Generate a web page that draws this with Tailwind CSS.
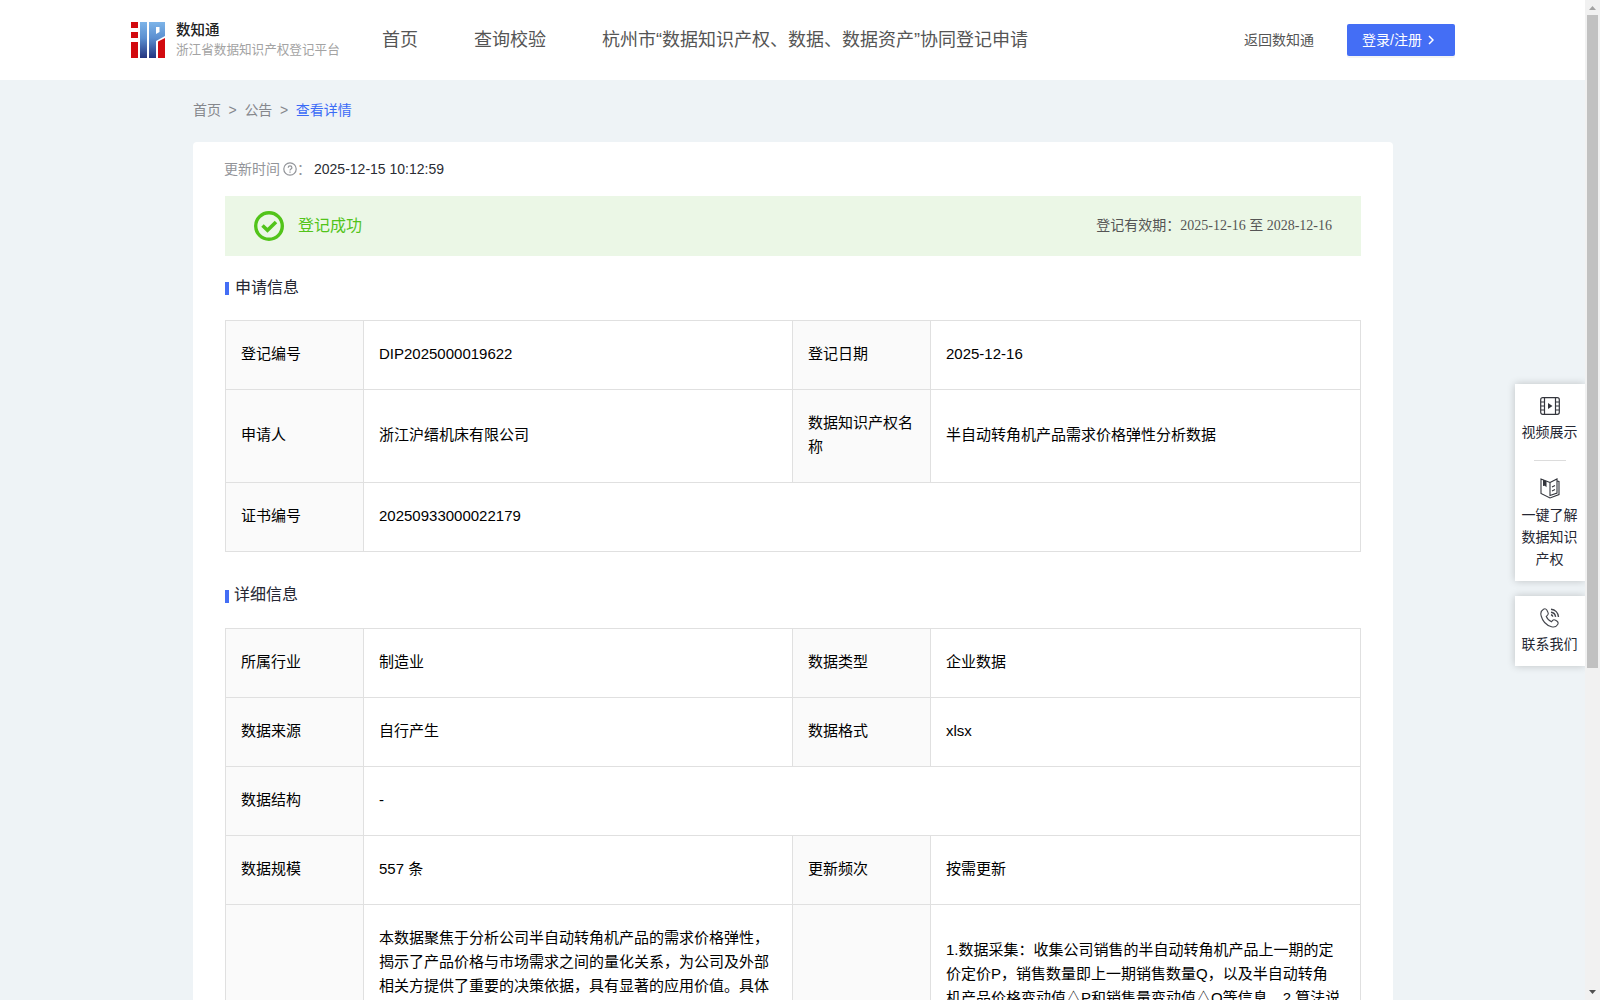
<!DOCTYPE html>
<html lang="zh-CN">
  <head>
    <meta charset="UTF-8" />
    <meta name="viewport" content="width=device-width, initial-scale=1.0" />
    <title>浙江省数据知识产权登记平台</title>
    <script src="https://cdn.jsdelivr.net/npm/@tailwindcss/browser@4"></script>
  </head>

  <body
    class="flex h-screen overflow-hidden bg-[#eef3f6] font-['Liberation_Sans','Noto_Sans_CJK_SC',sans-serif] text-sm text-[#555]"
  >
    <div class="relative h-full flex-1 overflow-hidden">
      <!-- Header -->
      <header class="flex h-20 items-center bg-white pl-[131px] pr-[130px]">
        <div class="flex w-[251px] items-center gap-[11px]">
          <svg class="h-9 w-[34px]" viewBox="0 0 34 36">
            <defs>
              <linearGradient id="logo-blue" x1="0" y1="0" x2="0" y2="36" gradientUnits="userSpaceOnUse">
                <stop offset="0" stop-color="#7db4e8" />
                <stop offset="0.45" stop-color="#5b8fd0" />
                <stop offset="1" stop-color="#23347f" />
              </linearGradient>
            </defs>
            <path fill="#d20a0f" d="M0 0h7v6H0zM0 10h7v6H0zM0 20h7v16H0zM27 19.500l7-3.500v20h-7z" />
            <path fill="url(#logo-blue)" d="M9 0h7v36H9zM18 0h16v14l-9 5v17h-7z" />
            <path fill="#fff" d="M25 5h3.500v5L25 12z" />
          </svg>
          <div class="whitespace-nowrap">
            <p class="text-[14.5px] leading-5 font-medium text-[#222]">数知通</p>
            <p class="text-[12.6px] leading-5 text-[#a3a3a3]">浙江省数据知识产权登记平台</p>
          </div>
        </div>
        <nav class="flex gap-14 pb-px text-lg leading-6 whitespace-nowrap">
          <a>首页</a>
          <a>查询校验</a>
          <a>杭州市“数据知识产权、数据、数据资产”协同登记申请</a>
        </nav>
        <a class="ml-auto pb-px">返回数知通</a>
        <button
          class="ml-[33px] flex h-8 w-[108px] items-center rounded-[2px] bg-[#446ef5] pb-px pl-[15px] text-white shadow-[0_2px_0_rgba(0,0,0,0.045)]"
        >
          <span>登录/注册</span>
          <svg class="ml-[6px] h-[10px] w-[6px]" viewBox="0 0 6 10" fill="none" stroke="#fff" stroke-width="1.500">
            <path d="M1 1l4 4-4 4" />
          </svg>
        </button>
      </header>

      <main class="ml-[193px] w-[1200px]">
        <!-- Breadcrumb -->
        <div class="flex h-[62px] items-center gap-[7.6px] pb-[2px] text-[#85878c]">
          <span>首页</span><span>&gt;</span><span>公告</span><span>&gt;</span>
          <span class="text-[#3b6bf6]">查看详情</span>
        </div>

        <div class="rounded bg-white px-8 pb-8">
          <div class="flex h-[54px] items-center pb-px text-[#929499]">
            <span class="-ml-px">更新时间</span>
            <svg class="mt-px ml-[3px] size-[14px]" viewBox="0 0 14 14" fill="none" stroke="#929499" stroke-width="1.200">
              <circle cx="7" cy="7" r="6.200" />
              <path d="M5.200 5.700c0-2.400 3.700-2.400 3.700 0 0 1.300-1.900 1.300-1.900 2.700M7 9.500v1.200" />
            </svg>
            <span class="w-[17px]">：</span>
            <span class="text-[#2a2c33]">2025-12-15 10:12:59</span>
          </div>

          <!-- Status -->
          <div class="flex h-[60px] items-center bg-[#ebf7e6] pr-[29px] pl-[29px]">
            <svg class="size-[30px]" viewBox="0 0 30 30" fill="none" stroke="#52c41a">
              <circle cx="15" cy="15" r="13.300" stroke-width="3.400" />
              <path d="M8.500 14.500l5 4.700 8.500-8.200" stroke-width="3.600" />
            </svg>
            <span class="ml-[14px] pb-px text-base text-[#52c41a]">登记成功</span>
            <span class="ml-auto pb-[2px]">登记有效期：<span class="font-['Liberation_Serif','Noto_Sans_CJK_SC',serif]">2025-12-16 至 2028-12-16</span></span>
          </div>

          <!-- Application info -->
          <h2 class="flex h-16 items-center text-base text-[#252733]">
            <i class="mt-px mr-[6px] h-[13px] w-1 bg-[#446ef5]"></i>
            <span class="pb-px">申请信息</span>
          </h2>
          <table class="w-full table-fixed border-collapse text-[15px] leading-6 text-black [&_td]:border [&_td]:border-[#e0e0e0] [&_td]:px-[15px] [&_td]:pt-[21px] [&_td]:pb-[23px] [&_th]:border [&_th]:border-[#e0e0e0] [&_th]:bg-[#fafafa] [&_th]:px-[15px] [&_th]:pt-[21px] [&_th]:pb-[23px] [&_th]:text-left [&_th]:font-normal">
            <colgroup>
              <col class="w-[138px]" />
              <col class="w-[429px]" />
              <col class="w-[138px]" />
              <col />
            </colgroup>
            <tr>
              <th>登记编号</th>
              <td>DIP2025000019622</td>
              <th>登记日期</th>
              <td>2025-12-16</td>
            </tr>
            <tr>
              <th>申请人</th>
              <td>浙江沪缙机床有限公司</td>
              <th>数据知识产权名称</th>
              <td>半自动转角机产品需求价格弹性分析数据</td>
            </tr>
            <tr>
              <th>证书编号</th>
              <td colspan="3">20250933000022179</td>
            </tr>
          </table>

          <!-- Details -->
          <h2 class="mt-3 flex h-16 items-center text-base text-[#252733]">
            <i class="mt-px mr-[5px] h-[13px] w-1 bg-[#446ef5]"></i>
            <span class="pb-[2px]">详细信息</span>
          </h2>
          <table class="w-full table-fixed border-collapse text-[15px] leading-6 text-black [&_td]:border [&_td]:border-[#e0e0e0] [&_td]:px-[15px] [&_td]:pt-[21px] [&_td]:pb-[23px] [&_th]:border [&_th]:border-[#e0e0e0] [&_th]:bg-[#fafafa] [&_th]:px-[15px] [&_th]:pt-[21px] [&_th]:pb-[23px] [&_th]:text-left [&_th]:font-normal">
            <colgroup>
              <col class="w-[138px]" />
              <col class="w-[429px]" />
              <col class="w-[138px]" />
              <col />
            </colgroup>
            <tr>
              <th>所属行业</th>
              <td>制造业</td>
              <th>数据类型</th>
              <td>企业数据</td>
            </tr>
            <tr>
              <th>数据来源</th>
              <td>自行产生</td>
              <th>数据格式</th>
              <td>xlsx</td>
            </tr>
            <tr>
              <th>数据结构</th>
              <td colspan="3">-</td>
            </tr>
            <tr>
              <th>数据规模</th>
              <td>557 条</td>
              <th>更新频次</th>
              <td>按需更新</td>
            </tr>
            <tr class="h-[240px]">
              <th></th>
              <td class="align-top whitespace-nowrap">
                本数据聚焦于分析公司半自动转角机产品的需求价格弹性，<br />
                揭示了产品价格与市场需求之间的量化关系，为公司及外部<br />
                相关方提供了重要的决策依据，具有显著的应用价值。具体
              </td>
              <th></th>
              <td class="align-top whitespace-nowrap">
                <div class="pt-3">
                  1.数据采集：收集公司销售的半自动转角机产品上一期的定<br />
                  价定价P，销售数量即上一期销售数量Q，以及半自动转角<br />
                  机产品价格变动值△P和销售量变动值△Q等信息。2.算法说
                </div>
              </td>
            </tr>
          </table>
        </div>
      </main>

      <!-- Floating tools -->
      <aside class="absolute top-[384px] right-0 w-[70px] text-center leading-[22px] text-[#252733]">
        <div class="flex h-[197px] flex-col items-center bg-white pt-[13px] shadow-[0_0_8px_rgba(0,0,0,0.2)]">
          <svg class="h-[18px] w-5" viewBox="0 0 20 18" fill="none" stroke="#33353c" stroke-width="1.200">
            <rect x="0.700" y="0.700" width="18.600" height="16.600" rx="2" />
            <path d="M4.500 1v16M15.500 1v16M1 5h3.500M1 9h3.500M1 13h3.500M15.500 5H19M15.500 9H19M15.500 13H19" />
            <path d="M8 6l4.500 3L8 12z" fill="#33353c" stroke="none" />
          </svg>
          <span class="mt-[6px] mr-px">视频展示</span>
          <i class="mt-[17px] h-px w-8 bg-[#dcdcdc]"></i>
          <svg class="mt-[17px] h-[21px] w-5 shrink-0" viewBox="0 0 20 21" fill="none" stroke="#33353c" stroke-width="1.100">
            <path d="M10 4.500L1 1v14.500l9 4.500 9-3.500V3.500l-2-.5" />
            <path d="M10 4.500v13l7-2.500V1l-7 3.500M12 9l3-1.500M12 13l3-1.500" />
            <path d="M3 1.800l3.500 1.500v6L4.800 7.700 3 8z" fill="#33353c" stroke="none" />
          </svg>
          <span class="mt-[5px] mr-px w-14">一键了解数据知识产权</span>
        </div>
        <div class="mt-[15px] flex h-[70px] flex-col items-center bg-white pt-[12px] shadow-[0_0_8px_rgba(0,0,0,0.2)]">
          <svg class="h-5 w-5" viewBox="0 0 20 20" fill="none" stroke="#44464d" stroke-width="1.100">
            <path d="M3.500 1.200C1.200 2.500.3 5 1.200 8c1.300 5 5.300 9.300 10.300 10.700 2.500.7 5-.2 6.200-2.200.7-1.200.4-2.400-.6-3.200l-1.500-1c-1.200-.8-2.400-.6-3.200.4l-.9 1.100c-2.500-1-4.300-3-5.300-5.500l1.200-1c.9-.8 1.100-1.900.5-3L6.800 2c-.8-1.200-2.100-1.500-3.300-.8z" />
            <path d="M11 1.300c4.200.4 7.200 3.500 7.500 7.700M11 4.200c2.600.3 4.300 2 4.600 4.600M11 6.800c1 .2 1.600.8 1.800 1.800" stroke-width="1.400" />
          </svg>
          <span class="mt-[5px] mr-px">联系我们</span>
        </div>
      </aside>
    </div>

    <!-- Scrollbar -->
    <div class="flex w-[15px] flex-col items-center bg-[#f1f1f1] pt-[6px] pb-[6px]">
      <svg class="h-[4px] w-[7px]" viewBox="0 0 7 4"><path d="M3.500 0L7 4H0z" fill="#a3a3a3" /></svg>
      <div class="mt-[5px] h-[653px] w-[11px] bg-[#c1c1c1]"></div>
      <svg class="mt-auto h-[4px] w-[7px]" viewBox="0 0 7 4"><path d="M0 0h7L3.500 4z" fill="#505050" /></svg>
    </div>
  </body>
</html>
